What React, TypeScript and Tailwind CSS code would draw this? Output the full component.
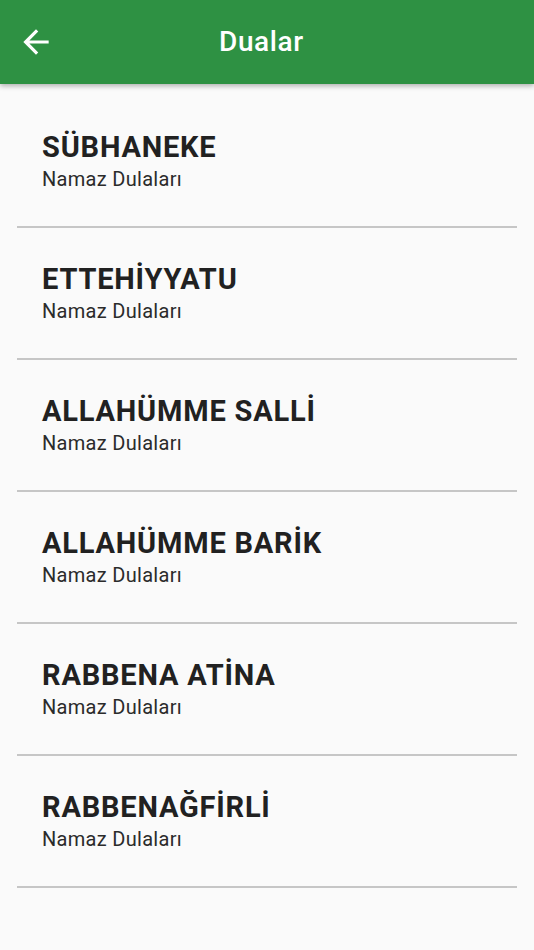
import React from 'react'

const dualar = [
  'SÜBHANEKE',
  'ETTEHİYYATU',
  'ALLAHÜMME SALLİ',
  'ALLAHÜMME BARİK',
  'RABBENA ATİNA',
  'RABBENAĞFİRLİ',
]

// material "arrow_back"
const BackArrow = () => (
  <svg width="38" height="38" viewBox="0 0 24 24" fill="white">
    <path d="M20 11H7.83l5.59-5.59L12 4l-8 8 8 8 1.41-1.41L7.83 13H20v-2z" />
  </svg>
)

export default function App() {
  return (
    <div className="min-h-screen w-full bg-[#fafafa] font-['Roboto',sans-serif]">
      {/* App bar */}
      <header className="relative z-10 flex h-[84px] items-center bg-[#2e9143] shadow-[0_2px_5px_rgba(0,0,0,0.3)]">
        <button className="ml-[17px] flex h-[38px] w-[38px] items-center justify-center">
          <BackArrow />
        </button>
        <h1 className="ml-[164px] text-[28px] font-medium leading-none tracking-[0.6px] text-white">
          Dualar
        </h1>
      </header>

      {/* List */}
      <ul className="px-[17px] pt-3">
        {dualar.map((name) => (
          <li key={name} className="border-b-2 border-[#c6c6c6]">
            <div className="px-[25px] py-[35px]">
              <p className="text-[29px] font-bold leading-8 tracking-[0.8px] text-[#212121]">
                {name}
              </p>
              <p className="mt-1 text-[20px] leading-6 tracking-[0.3px] text-[#2b2b2b]">
                Namaz Dulaları
              </p>
            </div>
          </li>
        ))}
      </ul>
    </div>
  )
}
